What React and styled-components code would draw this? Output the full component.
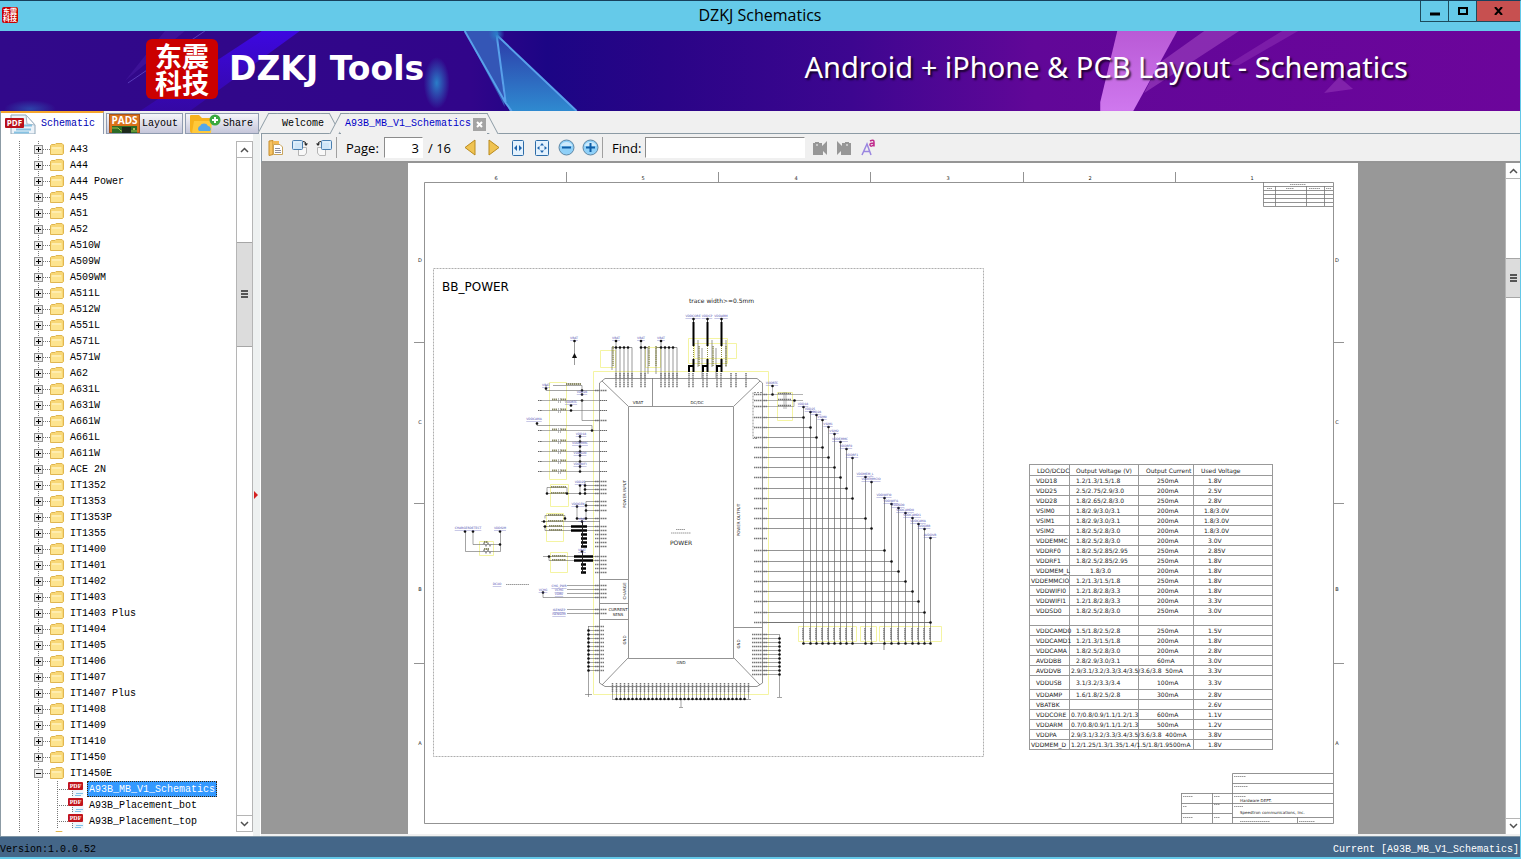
import React from 'react';
import styled, { createGlobalStyle } from 'styled-components';

const GlobalStyle = createGlobalStyle`
  * {
    box-sizing: border-box;
  }

  body {
    margin: 0;
    overflow: hidden;
    font-family: 'Liberation Mono', 'Noto Sans CJK SC', monospace;
    font-size: 10px;
    color: #000;
  }

  button {
    padding: 0;
    border: 0;
    background: none;
    color: inherit;
    font: inherit;
    cursor: pointer;
  }

  svg {
    display: block;
  }
`;

const Window = styled.div`
  display: flex;
  flex-direction: column;
  height: 100vh;
  border-top: 1px solid #17405c;
  border-right: 1px solid #63c8e8;
  border-bottom: 2px solid #63c8e8;
  background: #f0f0f0;
`;

const TitleBar = styled.header`
  display: grid;
  grid-template-columns: 1fr auto 1fr;
  flex: none;
  height: 30px;
  background: #65cae9;
`;

const AppIcon = styled.span`
  display: grid;
  width: 16px;
  height: 16px;
  margin: 6px 2px;
  border-radius: 2px;
  background: #c90000;
  color: #fff;
  font: 700 7px/7px 'Noto Sans CJK SC', sans-serif;
  place-content: center;
`;

const Title = styled.h1`
  margin: 0;
  font: 400 16px/29px 'Open Sans', sans-serif;
`;

const WindowButtons = styled.div`
  display: flex;
  justify-content: flex-end;
  height: 21px;
`;

const WindowButton = styled.button`
  display: grid;
  width: ${({ $close }) => ($close ? 44 : 28)}px;
  border: 1px solid #1d4a5c;
  border-width: 0 0 1px 1px;
  background: ${({ $close }) => ($close ? '#c75050' : 'transparent')};
  place-items: center;
`;

const Banner = styled.section`
  position: relative;
  display: flex;
  align-items: center;
  flex: none;
  height: 80px;
  padding: 0 112px 4px 146px;
  overflow: hidden;
  color: #fff;
`;

const BannerArt = styled.svg`
  position: absolute;
  inset: 0;
  width: 100%;
  height: 100%;
`;

const Logo = styled.div`
  position: relative;
  display: grid;
  width: 72px;
  height: 60px;
  border-radius: 6px;
  background: #cb0000;
  font: 700 27px/27px 'Noto Sans CJK SC', sans-serif;
  text-align: center;
  place-content: center;
`;

const Brand = styled.h2`
  position: relative;
  margin: 0 auto 0 11px;
  font: 700 33px/40px 'DejaVu Sans', sans-serif;
`;

const Slogan = styled.p`
  position: relative;
  margin: 0 0 4px;
  font: 400 29px/40px 'Noto Sans', sans-serif;
  text-shadow: 2px 2px 2px rgba(0, 0, 0, 0.7);
`;

const Main = styled.main`
  display: flex;
  flex: 1;
  min-height: 0;
`;

const Sidebar = styled.aside`
  display: flex;
  flex-direction: column;
  flex: none;
  width: 253px;
  border-left: 1px solid #8c9ba5;
  background: #fff;
`;

const SideTabs = styled.nav`
  display: flex;
  align-items: flex-end;
  flex: none;
  gap: 2px;
  width: 260px;
  height: 23px;
  background: #f0f0f0;
`;

const SideTab = styled.button`
  position: relative;
  display: flex;
  align-items: center;
  gap: ${({ $active }) => ($active ? 5 : 2)}px;
  width: ${({ $width }) => $width}px;
  height: ${({ $active }) => ($active ? 23 : 21)}px;
  padding-left: ${({ $active }) => ($active ? 3 : 2)}px;
  border: 1px solid #8f9bb0;
  border-bottom-width: ${({ $active }) => ($active ? 0 : 1)}px;
  background: ${({ $active }) => ($active ? '#fff' : 'linear-gradient(#f6f6fa, #c5c6da)')};
  color: ${({ $active }) => ($active ? '#0000b4' : '#000')};

  ${({ $active }) => $active && 'border-top: 2px solid #f5a52b; border-left: 0;'}
`;

const TreeArea = styled.div`
  display: flex;
  flex: 1;
  min-height: 0;
  margin: 7px 0 4px;
`;

const Tree = styled.ul`
  flex: 1;
  margin: 0;
  padding: 0 0 0 33px;
  overflow: hidden;
  background: repeating-linear-gradient(#777 0 1px, transparent 1px 2px) 18px 0 / 1px 100% no-repeat;
  list-style: none;

  ul {
    margin: 0;
    padding: 0 0 0 23px;
    background: repeating-linear-gradient(#777 0 1px, transparent 1px 2px) 4px 0 / 1px 100% no-repeat;
    list-style: none;
  }
`;

const TreeRow = styled.div`
  display: flex;
  align-items: center;
  height: 16px;
  background: ${({ $leaf }) =>
    $leaf
      ? 'repeating-linear-gradient(#777 0 1px, transparent 1px 2px) 0 0 / 1px 100% no-repeat'
      : 'repeating-linear-gradient(#777 0 1px, transparent 1px 2px) 4px 0 / 1px 100% no-repeat'};
`;

const Dots = styled.span`
  width: ${({ $width }) => $width}px;
  height: 1px;
  background: repeating-linear-gradient(90deg, #777 0 1px, transparent 1px 2px);
`;

const Expander = styled.button`
  display: grid;
  width: 9px;
  height: 9px;
  border: 1px solid #919191;
  background: #ececec;
  place-items: center;
`;

const TreeLabel = styled.button`
  height: 16px;
  margin-left: ${({ $leaf }) => ($leaf ? 3 : 4)}px;
  padding: 0 1px;
  border: 1px dotted ${({ $selected }) => ($selected ? '#3a2408' : 'transparent')};
  background: ${({ $selected }) => ($selected ? '#3399ff' : 'transparent')};
  color: ${({ $selected }) => ($selected ? '#fff' : '#000')};
  line-height: 16px;
  white-space: nowrap;
`;

const ScrollTrack = styled.div`
  display: flex;
  flex-direction: column;
  flex: none;
  width: ${({ $width }) => $width}px;
  border: 1px solid #b5b5b5;
  border-width: ${({ $flat }) => ($flat ? '0 0 0 1px' : '1px')};
  background: #fff;
`;

const ScrollButton = styled.button`
  display: grid;
  flex: none;
  height: 16px;
  border: 1px solid #b5b5b5;
  border-width: ${({ $down }) => ($down ? '1px 0 0' : '0 0 1px')};
  place-items: center;
`;

const ScrollSpace = styled.div`
  flex: ${({ $grow }) => $grow};
`;

const ScrollThumb = styled.div`
  display: grid;
  flex: ${({ $grow }) => $grow};
  border: 1px solid #a6a6a6;
  border-width: 1px 0;
  background: #dcdcdc;
  place-items: center;
`;

const Splitter = styled.div`
  display: grid;
  flex: none;
  width: 8px;
  margin-top: 23px;
  padding-top: 20px;
  border-right: 1px solid #fff;
  background: #eef1f1;
  align-items: center;
`;

const Workspace = styled.section`
  display: flex;
  flex-direction: column;
  flex: 1;
  min-width: 0;
`;

const DocTabs = styled.nav`
  display: flex;
  align-items: flex-end;
  flex: none;
  height: 23px;
  padding-left: 2px;
  border-bottom: 1px solid #8c9ba5;
`;

const DocTab = styled.div`
  position: relative;
  display: flex;
  align-items: center;
  gap: 2px;
  height: ${({ $active }) => ($active ? 21 : 20)}px;
  margin: 0 6px ${({ $active }) => ($active ? -1 : 0)}px;
  padding: ${({ $active }) => ($active ? '0 1px 0 4px' : '0 5px 0 13px')};
  border-top: 1px solid #8c9ba5;
  background: #f0f0f0;
  color: ${({ $active }) => ($active ? '#0000c8' : '#000')};

  &::before,
  &::after {
    position: absolute;
    top: -1px;
    bottom: 0;
    width: 8px;
    border: 0 solid #8c9ba5;
    border-top-width: 1px;
    background: #f0f0f0;
    content: '';
  }

  &::before {
    left: -6px;
    border-left-width: 1px;
    transform: skewX(-28deg);
  }

  &::after {
    right: -6px;
    border-right-width: 1px;
    transform: skewX(28deg);
  }

  > * {
    position: relative;
    z-index: 1;
    line-height: 18px;
  }
`;

const CloseButton = styled.button`
  display: grid;
  width: 13px;
  height: 13px;
  background: #a3a3a3;
  place-items: center;
`;

const Toolbar = styled.div`
  display: flex;
  align-items: center;
  flex: none;
  height: 29px;
  padding-left: 2px;
  border-bottom: 2px solid #959595;
  border-left: 1px solid #8c9ba5;
  font: 13px/20px 'Open Sans', sans-serif;
`;

const ToolButton = styled.button`
  display: grid;
  width: 24px;
  height: 24px;
  place-items: center;
`;

const Divider = styled.span`
  width: 1px;
  height: 21px;
  margin-right: 9px;
  background: #a0a0a0;
`;

const ToolLabel = styled.label`
  width: ${({ $width }) => $width}px;
`;

const ToolInput = styled.input`
  width: ${({ $width }) => $width}px;
  height: 21px;
  margin-right: 3px;
  padding: 0 3px;
  border: 1px solid #8c8c8c;
  border-color: #8c8c8c #fff #fff #8c8c8c;
  outline: 0;
  background: #fff;
  font: inherit;
  text-align: right;
`;

const PageCount = styled.span`
  margin: 0 7px 0 2px;
`;

const Viewer = styled.div`
  display: flex;
  flex: 1;
  min-height: 0;
  margin-bottom: 2px;
  background: #989898;
`;

const Sheet = styled.div`
  position: relative;
  width: 950px;
  margin: 0 auto;
  overflow: hidden;
  background: #fff;
`;

const SupplyTable = styled.table`
  position: absolute;
  top: 301px;
  left: 621px;
  width: 244px;
  border-collapse: collapse;
  table-layout: fixed;
  color: #222;
  font: 6px/9px 'DejaVu Sans', sans-serif;

  th,
  td {
    height: 10px;
    padding: 0 0 0 6px;
    border: 1px solid #999;
    font-weight: 400;
    text-align: left;
    white-space: pre;
  }

  th {
    height: 11px;
  }

  td:nth-child(3) {
    padding-left: 18px;
  }

  td:nth-child(4) {
    padding-left: 14px;
  }

  th:first-child,
  th:nth-child(n + 3) {
    padding-left: 7px;
  }

  tr > td.wide {
    padding-left: 1px;
  }

  tr > td.short {
    padding-left: 20px;
  }

  tr > td.range {
    padding-left: 10px;
  }

  tr.tall > td {
    height: 14px;
  }
`;

const StatusBar = styled.footer`
  display: flex;
  align-items: flex-end;
  justify-content: space-between;
  flex: none;
  height: 21px;
  border-top: 1px solid #7f95a5;
  background: #446688;
  line-height: 14px;

  span:last-child {
    padding-right: 1px;
    color: #fff;
  }
`;

const folders = [
  'A43', 'A44', 'A44 Power', 'A45', 'A51', 'A52', 'A510W', 'A509W', 'A509WM', 'A511L', 'A512W',
  'A551L', 'A571L', 'A571W', 'A62', 'A631L', 'A631W', 'A661W', 'A661L', 'A611W', 'ACE 2N',
  'IT1352', 'IT1353', 'IT1353P', 'IT1355', 'IT1400', 'IT1401', 'IT1402', 'IT1403', 'IT1403 Plus',
  'IT1404', 'IT1405', 'IT1406', 'IT1407', 'IT1407 Plus', 'IT1408', 'IT1409', 'IT1410', 'IT1450',
];

const files = ['A93B_MB_V1_Schematics', 'A93B_Placement_bot', 'A93B_Placement_top'];

const supplies = [
  ['VDD18', '1.2/1.3/1.5/1.8', '250mA', '1.8V'],
  ['VDD25', '2.5/2.75/2.9/3.0', '200mA', '2.5V'],
  ['VDD28', '1.8/2.65/2.8/3.0', '250mA', '2.8V'],
  ['VSIM0', '1.8/2.9/3.0/3.1', '200mA', '1.8/3.0V'],
  ['VSIM1', '1.8/2.9/3.0/3.1', '200mA', '1.8/3.0V'],
  ['VSIM2', '1.8/2.5/2.8/3.0', '200mA', '1.8/3.0V'],
  ['VDDEMMC', '1.8/2.5/2.8/3.0', '200mA', '3.0V'],
  ['VDDRF0', '1.8/2.5/2.85/2.95', '250mA', '2.85V'],
  ['VDDRF1', '1.8/2.5/2.85/2.95', '250mA', '1.8V'],
  ['VDDMEM_L', '1.8/3.0', '200mA', '1.8V'],
  ['VDDEMMCIO', '1.2/1.3/1.5/1.8', '250mA', '1.8V'],
  ['VDDWIFI0', '1.2/1.8/2.8/3.3', '200mA', '1.8V'],
  ['VDDWIFI1', '1.2/1.8/2.8/3.3', '200mA', '3.3V'],
  ['VDDSD0', '1.8/2.5/2.8/3.0', '250mA', '3.0V'],
  ['', '', '', ''],
  ['VDDCAMD0', '1.5/1.8/2.5/2.8', '250mA', '1.5V'],
  ['VDDCAMD1', '1.2/1.3/1.5/1.8', '200mA', '1.8V'],
  ['VDDCAMA', '1.8/2.5/2.8/3.0', '200mA', '2.8V'],
  ['AVDDBB', '2.8/2.9/3.0/3.1', '60mA', '3.0V'],
  ['AVDDVB', '2.9/3.1/3.2/3.3/3.4/3.5/3.6/3.8  50mA', '', '3.3V'],
  ['VDDUSB', '3.1/3.2/3.3/3.4', '100mA', '3.3V'],
  ['VDDAMP', '1.6/1.8/2.5/2.8', '300mA', '2.8V'],
  ['VBATBK', '', '', '2.6V'],
  ['VDDCORE', '0.7/0.8/0.9/1.1/1.2/1.3', '600mA', '1.1V'],
  ['VDDARM', '0.7/0.8/0.9/1.1/1.2/1.3', '500mA', '1.2V'],
  ['VDDPA', '2.9/3.1/3.2/3.3/3.4/3.5/3.6/3.8  400mA', '', '3.8V'],
  ['VDDMEM_D', '1.2/1.25/1.3/1.35/1.4/1.5/1.8/1.9500mA', '', '1.8V'],
];

// the supply and range columns are not aligned the same way on every line
const netClass = (net) => (net === 'VDDEMMCIO' || net === 'VDDMEM_D' ? 'wide' : undefined);

const outputClass = (output) => {
  if (output.length > 20) return 'wide';
  return output === '1.8/3.0' ? 'short' : undefined;
};

// output rails: x, top of the rail, junction with the pin line
const rails = [
  [803, 407, 417], [810, 412, 427], [816, 415, 437], [822, 420, 447], [828, 427, 457],
  [834, 434, 467], [840, 442, 477], [846, 449, 488], [852, 458, 498], [865, 477, 518],
  [871, 482, 528], [884, 498, 550], [891, 504, 561], [898, 508, 571], [905, 513, 581],
  [912, 518, 591], [918, 524, 601], [924, 529, 612], [930, 538, 622],
];

// input capacitor lines: y, x of the junction
const inputs = [[400, 582], [410, 571], [430, 592], [441, 580], [451, 580], [461, 580], [471, 580]];

const range = (from, to, step) =>
  Array.from({ length: Math.floor((to - from) / step) + 1 }, (_, i) => from + i * step);

const FolderIcon = () => (
  <svg width="14" height="12" viewBox="0 0 14 12">
    <path d="M.5 2.500 L1.500 1.500 H5 L6 .5 H12 L13.500 2 V10.500 L12.500 11.500 H.5Z" fill="#f8d775" stroke="#e0b650" />
    <path d="M1 4 H12 V11 H1Z" fill="#fde48f" />
    <path d="M2 5 H11" stroke="#fff6cf" />
  </svg>
);

const PdfIcon = () => (
  <svg width="16" height="16" viewBox="0 0 16 16">
    <path d="M4 .5 H11 L15.500 5 V15.500 H4Z" fill="#eef5fb" />
    <path d="M8 12.500 H15 M7 14.500 H13" stroke="#7fc0e6" />
    <path d="M4.500 10 V15" stroke="#777" strokeDasharray="1 1" />
    <rect y="1" width="15" height="8" rx="1" fill="#c1141c" />
    <text x="7.500" y="7" fill="#fff" fontFamily="Liberation Serif, serif" fontSize="6" fontWeight="700" textAnchor="middle">PDF</text>
  </svg>
);

const TabPdfIcon = () => (
  <svg width="32" height="20" viewBox="0 0 32 20">
    <path d="M7 1 H22 L31 11 V20 H7Z" fill="#edf3f9" stroke="#8ea6b8" />
    <path d="M22 1 L23 10 L31 11Z" fill="#fff" stroke="#a5b8c6" />
    <path d="M20 11.500 H28 M12 15.500 H27 M10 18.500 H25" stroke="#86c2e2" strokeWidth="2" />
    <rect x="1" y="4" width="19" height="10" rx="1" fill="#b9101a" />
    <text x="10.500" y="12" fill="#fff" fontFamily="Open Sans, sans-serif" fontSize="8" fontWeight="700" textAnchor="middle">PDF</text>
  </svg>
);

const PadsIcon = () => (
  <svg width="31" height="19" viewBox="0 0 31 19">
    <rect width="31" height="19" fill="#d9711a" />
    <rect x=".5" y=".5" width="30" height="18" fill="none" stroke="#a7531a" />
    <text x="15.500" y="10" fill="#fff" fontFamily="Open Sans, sans-serif" fontSize="10" fontWeight="700" textAnchor="middle">PADS</text>
    <path d="M3 12 H28 V19 H3Z" fill="#2c6b27" />
    <path d="M3 14 H9 L12 17 H28" fill="none" stroke="#9cc24a" />
    <path d="M13 13 H22 V19 H13Z" fill="#1d2a1c" />
    <circle cx="25" cy="15" r="1" fill="#e4d26a" />
  </svg>
);

const ShareIcon = () => (
  <svg width="33" height="19" viewBox="0 0 33 19">
    <path d="M2 2 Q2 1 3 1 H11 L14 4 H23 V19 H4 Q2 19 2 17Z" fill="#f6b21c" />
    <path d="M4 19 L6 7 H24 L23 19Z" fill="#ffc93b" />
    <path d="M11 17 a3 3 0 0 1 1 -5 a4.500 4.500 0 0 1 8 0 a3 3 0 0 1 2 5Z" fill="#54a7e8" />
    <circle cx="27" cy="6" r="5.500" fill="#3aa93e" />
    <path d="M27 3 V9 M24 6 H30" stroke="#fff" strokeWidth="2" />
  </svg>
);

const Chevron = ({ down }) => (
  <svg width="9" height="6" viewBox="0 0 9 6">
    <path d={down ? 'M1 1 L4.500 4.500 L8 1' : 'M1 5 L4.500 1.500 L8 5'} fill="none" stroke="#505050" strokeWidth="1.500" />
  </svg>
);

const Grip = () => (
  <svg width="7" height="8" viewBox="0 0 7 8">
    <path d="M0 1 H7 M0 4 H7 M0 7 H7" stroke="#555" strokeWidth="2" />
  </svg>
);

const ContentsIcon = () => (
  <svg width="16" height="16" viewBox="0 0 16 16">
    <path d="M1 1 L5 .5 V14.500 L1 15.500Z" fill="#f7c463" stroke="#c68c2c" />
    <path d="M5 1 H11 V4 H5Z" fill="#f3b955" />
    <path d="M5.500 4.500 H12 L14.500 7 V14.500 H5.500Z" fill="#fff" stroke="#c9a45b" />
    <path d="M7 8.500 H12 M7 10.500 H13 M7 12.500 H13" stroke="#8f8f9d" />
  </svg>
);

const RotateIcon = ({ left }) => (
  <svg width="16" height="16" viewBox="0 0 16 16">
    <g transform={left ? 'translate(16 0) scale(-1 1)' : undefined}>
      <path d="M6.500 7.500 H14.500 V13 L12.500 15.500 H6.500Z" fill="#f8f8f8" stroke="#b5b5b5" />
      <rect x=".5" y=".5" width="10" height="9" rx="1" fill="#cfe5f7" stroke="#4a7fb0" />
      <path d="M2 8 V2 H9" fill="none" stroke="#eaf5fd" />
      <path d="M11 1.500 Q14 1.500 14 4" fill="none" stroke="#222" />
      <path d="M12 3.500 H16 L14 6Z" fill="#222" />
    </g>
  </svg>
);

const ArrowIcon = ({ right }) => (
  <svg width="12" height="17" viewBox="0 0 12 17">
    <path
      d={right ? 'M1 1 V16 L11 8.500Z' : 'M11 1 V16 L1 8.500Z'}
      fill="#f0c352" stroke="#b98a1e" strokeLinejoin="round"
    />
  </svg>
);

const FitIcon = ({ page }) => (
  <svg width={page ? 14 : 12} height="16" viewBox={page ? '0 0 14 16' : '1 0 12 16'}>
    <rect x={page ? 0.5 : 1.5} y=".5" width={page ? 13 : 11} height="15" rx="1" fill="#e3f1fd" stroke="#2d6ca8" />
    {page ? (
      <path d="M7 3 L9 5.500 H5Z M7 13 L9 10.500 H5Z M2 8 L4.500 6 V10Z M12 8 L9.500 6 V10Z" fill="#1c63ac" />
    ) : (
      <path d="M6 5 V11 L3 8Z M8 5 V11 L11 8Z" fill="#1c63ac" />
    )}
  </svg>
);

const ZoomIcon = ({ plus }) => (
  <svg width="17" height="17" viewBox="0 0 17 17">
    <circle cx="8.500" cy="8.500" r="7.500" fill="#8fd0f8" stroke="#5f87a5" />
    <path d="M2.500 7 A6.500 6.500 0 0 1 14.500 7Z" fill="#cdeafc" />
    <path d={plus ? 'M4 8.500 H13 M8.500 4 V13' : 'M4 8.500 H13'} stroke="#0e5ea8" strokeWidth="2" />
  </svg>
);

const FindIcon = ({ next }) => (
  <svg width="16" height="16" viewBox="0 0 16 16">
    <g transform={next ? 'translate(16 0) scale(-1 1)' : undefined} fill="#979797">
      <path d="M1 3 H3 V2 H7 V3 H10 V6 L15 1 V15 L11 11 V15 H1Z" />
      <circle cx="5" cy="5" r="1" fill="#d8d8d8" />
    </g>
  </svg>
);

const MatchCaseIcon = () => (
  <svg width="15" height="17" viewBox="0 0 15 17">
    <path d="M1 16 L6 5 L10 16 M3 12.500 H8.500" fill="none" stroke="#9a86e0" strokeWidth="1.500" />
    <path d="M9 2 Q13 0 13 3 V7.500 M13 4 Q8.500 4 9 6 Q10 8.500 13 5.500" fill="none" stroke="#c02a8c" strokeWidth="1.500" />
  </svg>
);

const Scrollbar = ({ width, flat, before, thumb, after }) => (
  <ScrollTrack $width={width} $flat={flat}>
    <ScrollButton aria-label="Scroll up"><Chevron /></ScrollButton>
    <ScrollSpace $grow={before} />
    <ScrollThumb $grow={thumb}><Grip /></ScrollThumb>
    <ScrollSpace $grow={after} />
    <ScrollButton $down aria-label="Scroll down"><Chevron down /></ScrollButton>
  </ScrollTrack>
);

const Folder = ({ name, open, children }) => (
  <li>
    <TreeRow>
      <Expander aria-label={open ? 'Collapse' : 'Expand'}>
        <svg width="7" height="7" viewBox="0 0 7 7">
          <path d={open ? 'M1 3.500 H6' : 'M1 3.500 H6 M3.500 1 V6'} stroke="#000" />
        </svg>
      </Expander>
      <Dots $width={7} />
      <FolderIcon />
      <TreeLabel>{name}</TreeLabel>
    </TreeRow>
    {children}
  </li>
);

const BannerBackground = () => (
  <BannerArt viewBox="0 0 1521 80" preserveAspectRatio="none" aria-hidden="true">
    <defs>
      <linearGradient id="base">
        <stop offset="0" stopColor="#31098a" />
        <stop offset=".31" stopColor="#31058a" />
        <stop offset=".36" stopColor="#1c0585" />
        <stop offset=".44" stopColor="#2a0487" />
        <stop offset=".56" stopColor="#3d0690" />
        <stop offset=".68" stopColor="#610798" />
        <stop offset="1" stopColor="#6c059b" />
      </linearGradient>
      <linearGradient id="shard" x2="0" y2="1">
        <stop offset="0" stopColor="#2c3aa8" />
        <stop offset="1" stopColor="#2f8ad0" />
      </linearGradient>
      <linearGradient id="beam" x2="0" y2="1">
        <stop offset="0" stopColor="#b95ad6" />
        <stop offset="1" stopColor="#cf78ee" />
      </linearGradient>
      <linearGradient id="ray" x2="0" y2="1">
        <stop offset="0" stopColor="#3d08e0" />
        <stop offset="1" stopColor="#3d08e0" stopOpacity=".3" />
      </linearGradient>
      <radialGradient id="glow">
        <stop offset="0" stopColor="#2a7dc8" />
        <stop offset="1" stopColor="#2a7dc8" stopOpacity="0" />
      </radialGradient>
    </defs>
    <rect width="1521" height="80" fill="url(#base)" />
    <path d="M262 0 H300 L190 80 H140Z" fill="url(#ray)" />
    <path d="M205 0 L128 52" stroke="#6b52d0" opacity=".7" />
    <path d="M165 0 H185 L125 50Z" fill="#4a1ca6" opacity=".5" />
    <ellipse cx="437" cy="52" rx="13" ry="26" fill="url(#glow)" />
    <ellipse cx="30" cy="78" rx="26" ry="9" fill="url(#glow)" opacity=".5" />
    <path d="M465 0 H498 L505 76 L500 66Z" fill="#3456b6" />
    <path d="M497 4 L577 80 H510 L506 70Z" fill="url(#shard)" />
    <path d="M465 0 L506 72 L512 80 M497 4 L506 72 M497 4 L577 80" fill="none" stroke="#58a0ea" strokeWidth="2" />
    <circle cx="497" cy="3" r="8" fill="url(#glow)" />
    <path d="M1118 0 H1178 L1134 80 H1101 V71Z" fill="url(#beam)" />
    <path d="M1205 0 H1240 L1145 62 L1160 32Z" fill="#a54bc5" opacity=".55" />
    <path d="M1283 0 H1299 L1240 34 H1228Z" fill="#9a3fbd" opacity=".4" />
    <path d="M1340 46 L1354 58 L1325 62Z" fill="#9336b8" opacity=".6" />
  </BannerArt>
);

const Dot = ({ x, y }) => <circle cx={x} cy={y} r="1.300" fill="#111" />;

const Schematic = () => (
  <svg width="950" height="671" viewBox="408 163 950 671" fontFamily="DejaVu Sans, sans-serif" fontSize="4" fill="#222">
    {/* sheet frame */}
    <g fill="none" stroke="#777" strokeWidth=".8">
      <path d="M424.500 182.500 H1333.500 V823.500 H424.500Z" />
      <path d="M566.500 172 V182 M718.500 172 V182 M870.500 172 V182 M1023.500 172 V182 M1175.500 172 V182" />
      <path d="M414 342.500 H424 M414 503.500 H424 M414 663.500 H424 M1334 342.500 H1344 M1334 503.500 H1344 M1334 663.500 H1344" />
      <path d="M1263.500 182 V206.500 H1333 M1263.500 186.500 H1333 M1263.500 190.500 H1333 M1263.500 194.500 H1333 M1263.500 198.500 H1333 M1263.500 202.500 H1333 M1275.500 186 V206 M1306.500 186 V206 M1324.500 186 V206" />
      <path d="M1232.500 823 V773.500 H1333 M1232.500 783.500 H1333 M1181.500 793.500 H1333 M1181.500 803.500 H1333 M1181.500 813.500 H1232 M1232 817.500 H1333 M1181.500 793 V823 M1212.500 793 V823 M1297.500 817 V823" />
    </g>
    {[496, 643, 796, 948, 1090, 1252].map((x, i) => <text key={x} x={x} y="180" fontSize="5" textAnchor="middle">{6 - i}</text>)}
    {[['D', 262], ['C', 424], ['B', 591], ['A', 745]].map(([letter, y]) => (
      <g key={letter} fontSize="5" textAnchor="middle">
        <text x="420" y={y}>{letter}</text>
        <text x="1337" y={y}>{letter}</text>
      </g>
    ))}
    <g stroke="#999" strokeWidth="1.200" strokeDasharray="1.500 .5">
      <path d="M1290 184.500 H1306 M1267 188.500 H1272 M1286 188.500 H1294 M1309 188.500 H1320 M1326 188.500 H1331" />
      <path d="M1234 776.500 H1246 M1234 786.500 H1248 M1234 796.500 H1246 M1234 806.500 H1243 M1240 821.500 H1270 M1299 821.500 H1315" />
      <path d="M1183 796.500 H1193 M1183 806.500 H1187 M1183 817.500 H1193 M1214 796.500 H1220 M1214 804.500 H1220 M1214 817.500 H1220" />
    </g>
    <text x="1240" y="802">Hardware DEPT.</text>
    <text x="1240" y="814">Speedtron communications, Inc.</text>

    <path d="M433.500 268.500 H983.500 V756.500 H433.500Z" fill="none" stroke="#999" strokeWidth=".8" strokeDasharray="2 1" />
    <text x="442" y="291" fontSize="12" fill="#000">BB_POWER</text>
    <text x="689" y="303" fontSize="6">trace width&gt;=0.5mm</text>

    {/* chip body */}
    <g fill="none" stroke="#777" strokeWidth=".8">
      <path d="M599.500 383 L605 378.500 H757 L762.500 383 V683 L757 686.500 H605 L599.500 683Z" />
      <path d="M628.500 406.500 H733.500 V658.500 H628.500Z" />
      <path d="M602 381 L628 406 M760 381 L734 406 M602 685 L628 658 M760 685 L734 658" />
      <path d="M652.500 378 V406 M600 579.500 H628 M600 603.500 H628 M600 619.500 H628 M734 627.500 H762" />
      <path d="M762 392.500 H753 V438.500 H758" strokeDasharray="2 1" />
    </g>
    <g textAnchor="middle">
      <text x="638" y="404">VBAT</text>
      <text x="697" y="404">DC/DC</text>
      <text x="681" y="545" fontSize="6">POWER</text>
      <text x="618" y="611">CURRENT</text>
      <text x="618" y="616">SENS</text>
      <text x="681" y="664">GND</text>
      <text transform="translate(626 494) rotate(-90)">POWER INPUT</text>
      <text transform="translate(626 591) rotate(-90)">CHARGE</text>
      <text transform="translate(626 640) rotate(-90)">GND</text>
      <text transform="translate(740 520) rotate(-90)">POWER OUTPUT</text>
      <text transform="translate(740 644) rotate(-90)">GND</text>
    </g>
    <path d="M676 529.500 H685 M671 533 H691" stroke="#999" strokeDasharray="1.500 .5" />

    {/* capacitor outlines */}
    <g fill="none" stroke="#f1f18a" strokeWidth=".8">
      <path d="M593.500 371.500 H768.500 V694.500 H593.500Z" />
      <path d="M549.500 382.500 H566.500 V479.500 H549.500Z M550.500 484.500 H568.500 V506.500 H550.500Z M546.500 513.500 H563.500 V541.500 H546.500Z M550.500 552.500 H567.500 V572.500 H550.500Z" />
      <path d="M600.500 350.500 H615.500 V367.500 H600.500Z M645.500 347.500 H660.500 V367.500 H645.500Z M694.500 343.500 H736.500 V358.500 H694.500Z M688.500 338.500 H727.500 V363.500 H688.500Z" />
      <path d="M777.500 392.500 H792.500 V420.500 H777.500Z M798.500 626.500 H856.500 V641.500 H798.500Z M860.500 626.500 H876.500 V641.500 H860.500Z M879.500 626.500 H941.500 V641.500 H879.500Z" />
      <path d="M479.500 541.500 H493.500 V555.500 H479.500Z" />
    </g>

    {/* top supplies */}
    <g fill="none" stroke="#555" strokeWidth=".6">
      {[616, 620, 624, 628, 632, 641, 645, 661, 665, 669, 673, 677].map((x) => <path key={x} d={`M${x} 347.500 V378`} />)}
      <path d="M612 347.500 H632 M616 340 V347 M641 347.500 H648 V374 M641 340 V347 M656 374 V347.500 H677 M661 340 V347 M612 347 V370" />
      <path d="M574.500 340 V365 M698 340 V367 M712 340 V367 M726 340 V367 M716 348 V378 M702 348 V378" />
    </g>
    {[616, 620, 624, 628, 641, 645, 661, 665, 669, 673].map((x) => <Dot key={x} x={x} y="347.500" />)}
    <path d="M574.500 353 L577 358 H572Z" fill="#111" />
    {[['VDDCORE', 693], ['VDDCP', 707], ['VDDARM', 721]].map(([net, x]) => (
      <g key={net}>
        <text x={x} y="317" fill="#4a4ab0" fontSize="3" textAnchor="middle" textDecoration="underline">{net}</text>
        <path d={`M${x + 0.5} 318 V324`} stroke="#111" strokeWidth=".8" />
        <path d={`M${x + 0.5} 322 V346 M${x + 0.5} 359 V372 M${x + 0.5} 366 H${x - 4} V372`} fill="none" stroke="#000" strokeWidth="2" />
        <path d={`M${x + 0.5} 346 V359`} stroke="#8f8f3d" strokeDasharray="1 1" />
        <Dot x={x + 0.5} y="319" />
      </g>
    ))}
    <g fill="#4a4ab0" fontSize="3" textAnchor="middle" textDecoration="underline">
      {[574, 616, 641, 661].map((x) => <text key={x} x={x} y="339">VBAT</text>)}
    </g>
    {[574.5, 616, 641, 661].map((x) => <Dot key={x} x={x} y="341" />)}
    <g stroke="#777" strokeWidth="1.500" strokeDasharray="1.500 .6">
      {[616, 620, 624, 628, 632, 641, 645, 661, 665, 669, 673, 677, 689, 693, 703, 707, 717, 721, 731, 736, 746].map((x) => (
        <path key={x} d={`M${x} 373 V388`} />
      ))}
      {[613, 649, 656, 699, 713, 726].map((x) => <path key={x} d={`M${x} 346 V366`} stroke="#8f8f55" />)}
    </g>

    {/* input side */}
    {inputs.map(([y, x]) => (
      <g key={y}>
        <path d={`M541 ${y}.500 H600`} stroke="#777" strokeWidth=".6" />
        <path d={`M552 ${y - 1}.500 H557 M561 ${y - 1}.500 H566`} stroke="#8a8a66" strokeWidth="2" strokeDasharray="1.500 .5" />
        <path d={`M558.500 ${y - 2} V${y + 3} M560.500 ${y - 2} V${y + 3}`} stroke="#888" strokeWidth=".6" />
        <path d={`M538 ${y}.500 H542 M600 ${y}.500 H607`} stroke="#666" strokeDasharray="1.500 .5" />
        <Dot x={x} y={y + 0.5} />
      </g>
    ))}
    <g fill="none" stroke="#666" strokeWidth=".6">
      <path d="M546 385 V390.500 H600 M553 385.500 H582 V390 M582 400 V420.500 H600 M537 422 V425.500 H592 V430 M580 435 V471" />
      <path d="M547 487.500 H567 V493.500 H547Z M567 493.500 H600 M580 485 V493 M585 481.500 V494 M585 481.500 H600 M585 485.500 H600 M585 489.500 H600" />
      <path d="M541 521.500 H600 M543 526.500 H600 M545 518.500 V515.500 H565 V521 M545 526 V530.500 H600 M577 506 V518.500 H600 M586 518 V501.500 H600 M586 505.500 H600 M586 510.500 H600" />
      <path d="M543 556.500 H600 M549 556 V560.500 H600" />
      <path d="M543 592 V597.500 H600 M567 585.500 H600 M567 589.500 H600 M567 593.500 H600 M567 609.500 H600 M567 613.500 H600" />
      <path d="M465.500 531 V551.500 H500.500 V531 M473 531 V544.500 H500.500" />
      <path d="M483 544.500 l1 -2 l2 4 l2 -4 l2 4 l1 -2 M483 551.500 l1 -2 l2 4 l2 -4 l2 4 l1 -2" />
    </g>
    <g stroke="#8a8a66" strokeWidth="2" strokeDasharray="1.500 .5">
      <path d="M551 487 H566 M551 493 H566 M548 515 H563 M548 521 H563 M549 526 H562 M549 530 H562 M552 556 H566 M552 560 H566 M484 542 H488 M484 549 H489 M566 384 H581" />
      <path d="M506 584.500 H529" stroke="#999" strokeWidth="1" />
    </g>
    <path d="M571 526.500 H587 M571 530.500 H587 M581 534.500 H587 M581 538.500 H587 M581 542.500 H587 M581 546.500 H587 M574 556.500 H593 M574 560.500 H593 M581 564.500 H586 M581 568.500 H586 M581 572.500 H586" stroke="#000" strokeWidth="2.500" />
    <path d="M582.500 521 V547 M582.500 552 V573" stroke="#222" />
    {[
      [582, 390], [582, 394], [571, 405], [546, 388], [537, 423], [580, 436], [580, 446], [580, 455], [580, 466],
      [547, 493], [567, 493], [585, 485], [585, 489], [585, 493], [580, 493], [580, 485], [586, 505], [586, 510],
      [586, 518], [577, 518], [577, 506], [565, 518], [544, 521], [545, 526], [549, 556], [543, 592],
      [500, 544], [500, 531], [473, 531], [465, 531], [582, 521], [582, 551],
    ].map(([x, y]) => <Dot key={`${x}-${y}`} x={x} y={y + 0.5} />)}
    <g fill="#4a4ab0" fontSize="3" textAnchor="middle" textDecoration="underline">
      {[
        ['VBAT', 546, 386], ['VDD28', 582, 393], ['VDDRTC', 571, 403], ['VDDCAMA', 534, 420], ['VDD18', 581, 435],
        ['VDDEMMC', 580, 444], ['VDDSD0', 580, 454], ['VDDWIFI', 580, 465], ['VDD25', 580, 483], ['VDDGEN', 578, 505],
        ['VBAT', 582, 520], ['VBAT', 582, 551], ['CHG_PWR', 559, 587], ['VCHG', 559, 591], ['VDRV', 559, 595],
        ['VCHG', 543, 591], ['ISENSEP', 559, 611], ['ISENSEM', 559, 615], ['DCXO', 497, 585], ['VDDSIM', 500, 529],
      ].map(([net, x, y]) => <text key={`${net}-${y}-${x}`} x={x} y={y}>{net}</text>)}
      <text x="468" y="529">CHARGERDETECT</text>
    </g>
    <g stroke="#777" strokeWidth="1.500" strokeDasharray="1.500 .5">
      {[390, 420, 481, 485, 489, 493, 501, 505, 510, 518, 526, 530, 534, 538, 542, 546, 556, 560, 564, 568, 572, 585, 589, 593, 597, 609, 613].map((y) => (
        <path key={y} d={`M595 ${y}.500 H607`} />
      ))}
    </g>

    {/* output side */}
    <g fill="none" stroke="#666" strokeWidth=".7">
      {rails.map(([x, top, y]) => <path key={x} d={`M${x}.500 ${top} V643 M762 ${y}.500 H${x}`} />)}
      <path d="M802 643.500 H931 M884 643 V650" />
      <path d="M762 394.500 H803 M762 400.500 H803 M762 406.500 H794 V400 M772.500 386 V394 M784 392 V409 M786 392 V409" strokeWidth=".5" />
      <path d="M762 622.500 H930" />
    </g>
    <g stroke="#777" strokeWidth="1.500" strokeDasharray="1.500 .5">
      {rails.map(([x, , y]) => (
        <path key={x} d={`M754 ${y}.500 H767 M${x} 628 V640`} />
      ))}
      <path d="M754 394.500 H767 M754 400.500 H767 M754 406.500 H767 M778 393.500 H791 M778 399.500 H791 M778 405.500 H791 M754 508.500 H767 M754 538.500 H767" />
    </g>
    {rails.map(([x, top, y], i) => (
      <g key={x}>
        <Dot x={x + 0.5} y={top} />
        <Dot x={x + 0.5} y={y + 0.5} />
        <Dot x={x + 0.5} y="643.500" />
        <text x={x} y={top - 2} fill="#4a4ab0" fontSize="3" textAnchor="middle" textDecoration="underline">
          {supplies.filter(([net]) => net)[i][0]}
        </text>
      </g>
    ))}
    <text x="772" y="384" fill="#4a4ab0" fontSize="3" textAnchor="middle" textDecoration="underline">VDDRTC</text>
    <Dot x="772.500" y="386" />
    <Dot x="772.500" y="394.500" />
    <Dot x="794.500" y="400.500" />

    {/* ground pins */}
    <g fill="none" stroke="#666" strokeWidth=".6">
      <path d="M588.500 626 V697 M779.500 634 V697 M612 699.500 H751 M681 699 V707 M585 694.500 H592 M777 697.500 H782 M679 707.500 H683" />
      {range(626, 670, 4).map((y) => <path key={y} d={`M588 ${y}.500 H600`} />)}
      {range(634, 674, 4).map((y) => <path key={y} d={`M762 ${y}.500 H779`} />)}
      {range(612, 750, 4).map((x) => <path key={x} d={`M${x}.500 687 V699`} />)}
    </g>
    <g stroke="#777" strokeWidth="1.500" strokeDasharray="1.500 .5">
      {range(626, 670, 4).map((y) => <path key={y} d={`M595 ${y}.500 H604`} />)}
      {range(634, 674, 4).map((y) => <path key={y} d={`M752 ${y}.500 H767`} />)}
      {range(612, 750, 4).map((x) => <path key={x} d={`M${x}.500 683 V692`} />)}
    </g>
    {range(630, 670, 4).map((y) => <Dot key={y} x="588.500" y={y + 0.5} />)}
    {range(638, 674, 4).map((y) => <Dot key={y} x="779.500" y={y + 0.5} />)}
    {range(616, 746, 4).map((x) => <Dot key={x} x={x + 0.5} y="699" />)}
  </svg>
);

const Supplies = () => (
  <SupplyTable>
    <colgroup>
      <col width="40" />
      <col width="69" />
      <col width="55" />
      <col />
    </colgroup>
    <thead>
      <tr>
        <th>LDO/DCDC</th>
        <th>Output Voltage (V)</th>
        <th>Output Current</th>
        <th>Used Voltage</th>
      </tr>
    </thead>
    <tbody>
      {supplies.map(([net, output, current, used], i) => (
        <tr key={i} className={net === 'VDDUSB' ? 'tall' : undefined}>
          <td className={netClass(net)}>{net}</td>
          <td className={outputClass(output)}>{output}</td>
          <td>{current}</td>
          <td className={used === '1.8/3.0V' ? 'range' : undefined}>{used}</td>
        </tr>
      ))}
    </tbody>
  </SupplyTable>
);

const App = () => {
  return (
    <Window>
      <GlobalStyle />
      <TitleBar>
        <AppIcon>
          <span>东震</span>
          <span>科技</span>
        </AppIcon>
        <Title>DZKJ Schematics</Title>
        <WindowButtons>
          <WindowButton aria-label="Minimize">
            <svg width="10" height="9" viewBox="0 0 10 9"><path d="M0 7 H10" stroke="#000" strokeWidth="3" /></svg>
          </WindowButton>
          <WindowButton aria-label="Maximize">
            <svg width="10" height="8" viewBox="0 0 10 8"><rect x="1" y="1" width="8" height="6" fill="none" stroke="#000" strokeWidth="2" /></svg>
          </WindowButton>
          <WindowButton $close aria-label="Close">
            <svg width="9" height="8" viewBox="0 0 9 8"><path d="M1 0 L8 8 M8 0 L1 8" stroke="#000" strokeWidth="2" /></svg>
          </WindowButton>
        </WindowButtons>
      </TitleBar>
      <Banner>
        <BannerBackground />
        <Logo>
          <span>东震</span>
          <span>科技</span>
        </Logo>
        <Brand>DZKJ Tools</Brand>
        <Slogan>Android + iPhone &amp; PCB Layout - Schematics</Slogan>
      </Banner>
      <Main>
        <Sidebar>
          <SideTabs>
            <SideTab $active $width={103}><TabPdfIcon />Schematic</SideTab>
            <SideTab $width={77}><PadsIcon />Layout</SideTab>
            <SideTab $width={74}><ShareIcon />Share</SideTab>
          </SideTabs>
          <TreeArea>
            <Tree>
              {folders.map((name) => <Folder key={name} name={name} />)}
              <Folder name="IT1450E" open>
                <ul>
                  {files.map((name, i) => (
                    <li key={name}>
                      <TreeRow $leaf>
                        <Dots $width={11} />
                        <PdfIcon />
                        <TreeLabel $leaf $selected={i === 0}>{name}</TreeLabel>
                      </TreeRow>
                    </li>
                  ))}
                </ul>
              </Folder>
              <Folder name="" />
            </Tree>
            <Scrollbar width={17} before={84} thumb={104} after={470} />
          </TreeArea>
        </Sidebar>
        <Splitter>
          <svg width="6" height="8" viewBox="0 0 6 8"><path d="M1 0 L5 4 L1 8Z" fill="#d42020" /></svg>
        </Splitter>
        <Workspace>
          <DocTabs>
            <DocTab><button>Welcome</button></DocTab>
            <DocTab $active>
              <button>A93B_MB_V1_Schematics</button>
              <CloseButton aria-label="Close tab">
                <svg width="7" height="7" viewBox="0 0 7 7"><path d="M1 1 L6 6 M6 1 L1 6" stroke="#fff" strokeWidth="2" /></svg>
              </CloseButton>
            </DocTab>
          </DocTabs>
          <Toolbar>
            <ToolButton aria-label="Contents"><ContentsIcon /></ToolButton>
            <ToolButton aria-label="Rotate right"><RotateIcon /></ToolButton>
            <ToolButton aria-label="Rotate left"><RotateIcon left /></ToolButton>
            <Divider />
            <ToolLabel htmlFor="page" $width={38}>Page:</ToolLabel>
            <ToolInput id="page" $width={39} defaultValue="3" />
            <PageCount>/ 16</PageCount>
            <ToolButton aria-label="Previous page"><ArrowIcon /></ToolButton>
            <ToolButton aria-label="Next page"><ArrowIcon right /></ToolButton>
            <ToolButton aria-label="Fit width"><FitIcon /></ToolButton>
            <ToolButton aria-label="Fit page"><FitIcon page /></ToolButton>
            <ToolButton aria-label="Zoom out"><ZoomIcon /></ToolButton>
            <ToolButton aria-label="Zoom in"><ZoomIcon plus /></ToolButton>
            <Divider />
            <ToolLabel htmlFor="find" $width={33}>Find:</ToolLabel>
            <ToolInput id="find" $width={160} />
            <ToolButton aria-label="Find previous"><FindIcon /></ToolButton>
            <ToolButton aria-label="Find next"><FindIcon next /></ToolButton>
            <ToolButton aria-label="Match case"><MatchCaseIcon /></ToolButton>
          </Toolbar>
          <Viewer>
            <Sheet>
              <Schematic />
              <Supplies />
            </Sheet>
            <Scrollbar width={15} flat before={79} thumb={39} after={522} />
          </Viewer>
        </Workspace>
      </Main>
      <StatusBar>
        <span>Version:1.0.0.52</span>
        <span>Current [A93B_MB_V1_Schematics]</span>
      </StatusBar>
    </Window>
  );
};

export default App;
